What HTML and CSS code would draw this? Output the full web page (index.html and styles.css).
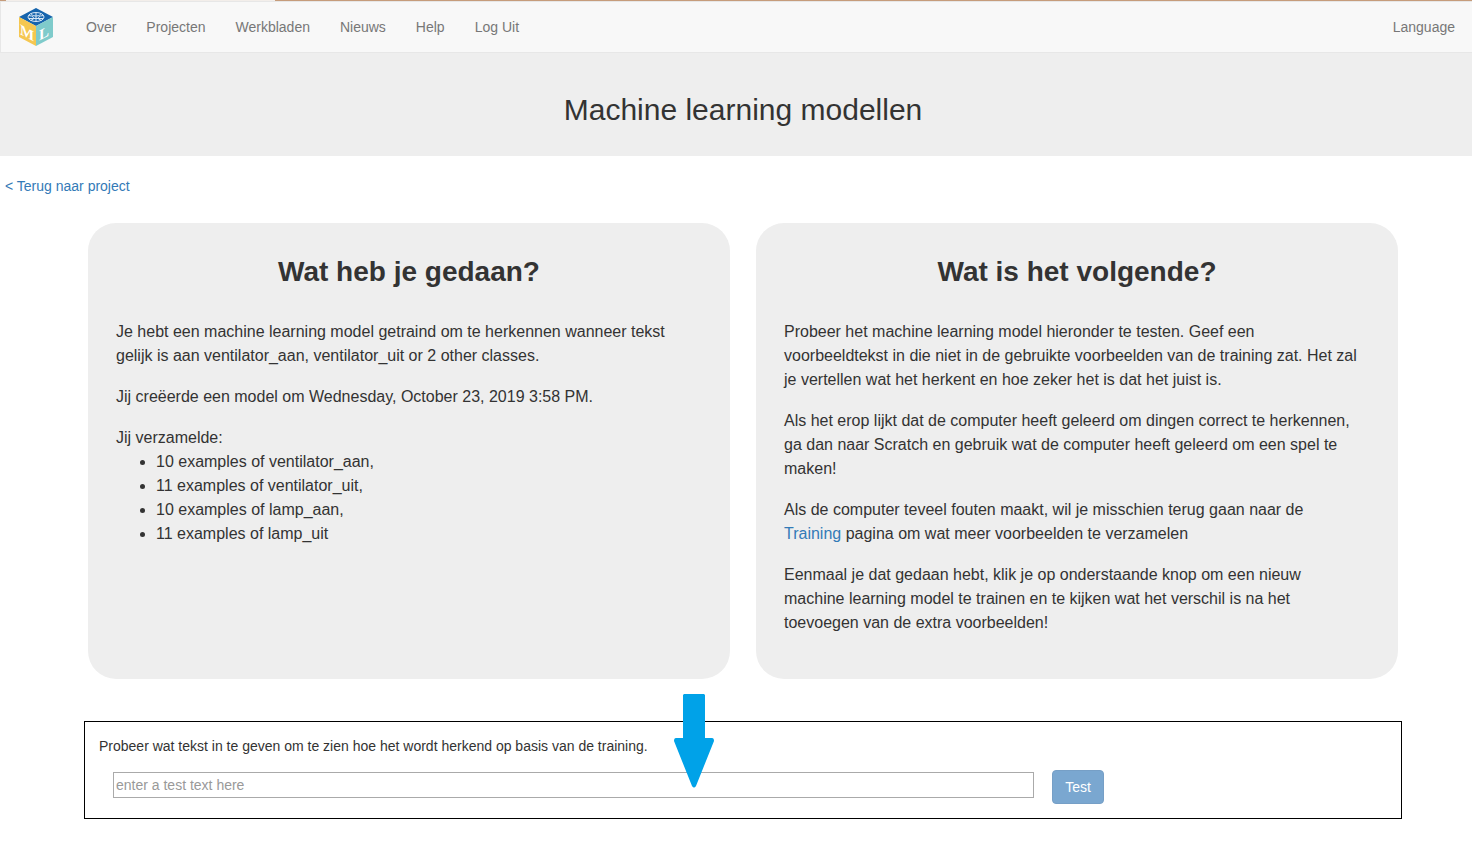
FILE: index.html
```html
<!DOCTYPE html>
<html lang="nl">
<head>
<meta charset="utf-8">
<title>Machine learning modellen</title>
<link rel="stylesheet" href="styles.css">
</head>
<body>
<div class="top-edge"></div>
<nav class="navbar">
  <a class="brand" href="#" aria-label="Home">
    <svg width="36" height="40" viewBox="0 0 36 40" aria-hidden="true">
      <path fill="#1664ad" d="M18 1 35 10 18 19 1 10z"/>
      <path fill="#f5c750" d="M1 10 18 19V39L1 30z"/>
      <path fill="#7fcbcb" d="M35 10 18 19V39L35 30z"/>
      <g fill="none" stroke="#d6e6f5" stroke-width="1">
        <ellipse cx="18" cy="10" rx="8" ry="4.5"/>
        <path d="M18 5.500v9M10.500 8.500q4 0 5 2t-3 3M25.500 8.500q-4 0-5 2t3 3M13 6.500q1 3 5 2.500 4 .500 5-2.500M11 11.500h14"/>
      </g>
      <text class="logo-letter" x="9" y="26" transform="skewY(28)">M</text>
      <text class="logo-letter" x="26" y="45" transform="skewY(-28)">L</text>
    </svg>
  </a>
  <a class="nav-link" href="#">Over</a>
  <a class="nav-link" href="#">Projecten</a>
  <a class="nav-link" href="#">Werkbladen</a>
  <a class="nav-link" href="#">Nieuws</a>
  <a class="nav-link" href="#">Help</a>
  <a class="nav-link" href="#">Log Uit</a>
  <a class="nav-link nav-language" href="#">Language</a>
</nav>
<header class="page-header">
  <h1 class="page-title">Machine learning modellen</h1>
</header>
<div class="back"><a href="#">&lt; Terug naar project</a></div>
<main class="content">
  <div class="cards">
    <section class="card">
      <h2 class="card-title">Wat heb je gedaan?</h2>
      <p>Je hebt een machine learning model getraind om te herkennen wanneer tekst gelijk is aan ventilator_aan, ventilator_uit or 2 other classes.</p>
      <p>Jij creëerde een model om Wednesday, October 23, 2019 3:58 PM.</p>
      <div>Jij verzamelde:
        <ul class="examples">
          <li>10 examples of ventilator_aan,</li>
          <li>11 examples of ventilator_uit,</li>
          <li>10 examples of lamp_aan,</li>
          <li>11 examples of lamp_uit</li>
        </ul>
      </div>
    </section>
    <section class="card">
      <h2 class="card-title">Wat is het volgende?</h2>
      <p>Probeer het machine learning model hieronder te testen. Geef een voorbeeldtekst in die niet in de gebruikte voorbeelden van de training zat. Het zal je vertellen wat het herkent en hoe zeker het is dat het juist is.</p>
      <p>Als het erop lijkt dat de computer heeft geleerd om dingen correct te herkennen, ga dan naar Scratch en gebruik wat de computer heeft geleerd om een spel te maken!</p>
      <p>Als de computer teveel fouten maakt, wil je misschien terug gaan naar de <a href="#">Training</a> pagina om wat meer voorbeelden te verzamelen</p>
      <p>Eenmaal je dat gedaan hebt, klik je op onderstaande knop om een nieuw machine learning model te trainen en te kijken wat het verschil is na het toevoegen van de extra voorbeelden!</p>
    </section>
  </div>
  <form class="test-box">
    <label class="test-label" for="test-text">Probeer wat tekst in te geven om te zien hoe het wordt herkend op basis van de training.</label>
    <div class="test-row">
      <input class="test-input" id="test-text" type="text" placeholder="enter a test text here">
      <button class="test-button" type="button">Test</button>
    </div>
    <svg class="arrow" width="40" height="94" viewBox="0 0 40 94" aria-hidden="true">
      <path fill="#00a2e8" d="M10 0h20l1 1v43h7q2 0 2 3L22 92q-2 3-4 0L0 47q0-3 2-3h7V1z"/>
    </svg>
  </form>
</main>
</body>
</html>
```
FILE: styles.css
```css
* {
  box-sizing: border-box;
}

body {
  margin: 0;
  background: #fff;
  color: #333;
  font: 14px/20px "Liberation Sans", Arial, sans-serif;
}

a {
  color: #337ab7;
  text-decoration: none;
}

.top-edge {
  height: 1px;
  background: linear-gradient(to right, #c69c7b 6px, #f3eeea 6px, #f3eeea 275px, #c69c7b 275px);
}

.navbar {
  display: flex;
  align-items: center;
  height: 52px;
  padding: 0 2px 0 0;
  background: #f8f8f8;
  border: 1px solid #e7e7e7;
  border-right: 0;
}

.brand {
  display: flex;
  padding: 0 17px;
}

.logo-letter {
  fill: #fff;
  font: bold 15px "Liberation Serif", serif;
  text-anchor: middle;
}

.nav-link {
  padding: 15px;
  color: #777;
}

.nav-language {
  margin-left: auto;
}

.page-header {
  padding: 40px 0 30px 14px;
  background: #eee;
  text-align: center;
}

.page-title {
  margin: 0;
  font-size: 30px;
  line-height: 33px;
  font-weight: 400;
}

.back {
  padding: 20px 5px 0;
}

.content {
  padding: 27px 70px 28px 84px;
}

.cards {
  display: grid;
  grid-template-columns: 1fr 1fr;
  gap: 26px;
  padding: 0 4px;
}

.card {
  padding: 33px 28px 27px;
  background: #eee;
  border-radius: 28px;
  font-size: 16px;
  line-height: 24px;
}

.card-title {
  margin: 0 0 32px;
  font-size: 28px;
  line-height: 32px;
  text-align: center;
}

.card p {
  margin: 0 0 17px;
  padding-right: 10px;
}

.examples {
  margin: 0;
  padding-left: 40px;
}

.test-box {
  position: relative;
  margin-top: 42px;
  padding: 14px 0;
  border: 1px solid #000;
}

.test-label {
  display: block;
  padding: 0 14px;
}

.test-row {
  display: flex;
  align-items: flex-start;
  gap: 18px;
  margin-top: 14px;
}

.test-input {
  width: 70%;
  height: 26px;
  margin: 2px 0 0 28px;
  padding: 0 2px;
  border: 1px solid #aaa;
  color: #333;
  font: inherit;
}

.test-input::placeholder {
  color: #999;
}

.test-button {
  padding: 6px 12px;
  border: 1px solid #769fc6;
  border-radius: 4px;
  background: #7aa7d0;
  color: #fff;
  font: inherit;
}

/* Pointer laid over the test form */
.arrow {
  position: absolute;
  top: -28px;
  left: 589px;
}
```
